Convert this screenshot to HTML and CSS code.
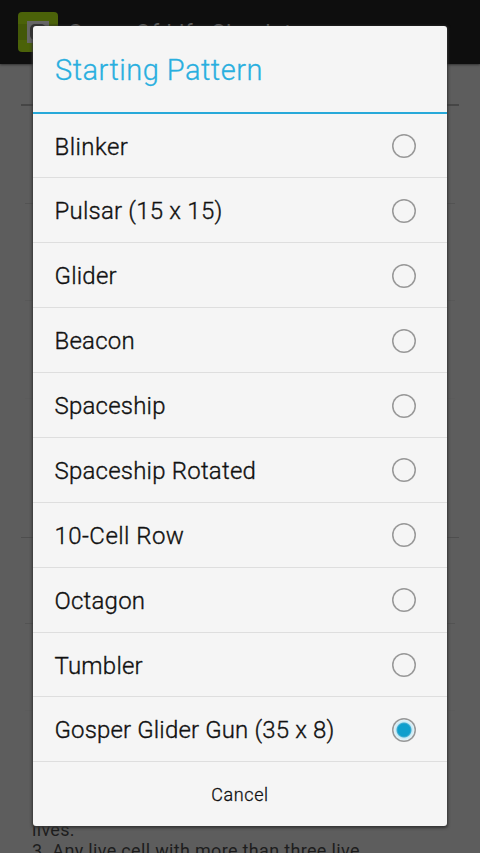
FILE: index.html
```
<!DOCTYPE html>
<html lang="en">
<head>
<meta charset="utf-8">
<title>Game Of Life Simulator</title>
<link rel="stylesheet" href="styles.css">
</head>
<body>
<div class="screen">
  <header class="bar">
    <svg class="logo" width="40" height="40" viewBox="0 0 40 40"><rect width="40" height="40" rx="4" fill="#4b6209"/><rect y="12" width="40" height="16" fill="#435808"/><rect x="9" y="9" width="22" height="22" fill="#666"/><rect x="12" y="12" width="16" height="16" rx="5" fill="#333"/></svg>
    <span class="bar-title">Game Of Life Simulator</span>
  </header>
  <main class="page">
    <div class="rule strong"></div>
    <div class="rule short"></div>
    <div class="rule short faint"></div>
    <div class="rule short none"></div>
    <div class="rule long"></div>
    <div class="rule short near"></div>
    <div class="rule short none"></div>
    <p class="rules">lives.<br>3. Any live cell with more than three live</p>
  </main>
</div>
<section class="dialog" role="dialog">
  <h1 class="title"><span>Starting Pattern</span></h1>
  <ul class="list">
    <li class="item wide"><span>Blinker</span><i class="radio"></i></li>
    <li class="item"><span>Pulsar (15 x 15)</span><i class="radio"></i></li>
    <li class="item"><span>Glider</span><i class="radio"></i></li>
    <li class="item"><span>Beacon</span><i class="radio"></i></li>
    <li class="item"><span>Spaceship</span><i class="radio"></i></li>
    <li class="item"><span>Spaceship Rotated</span><i class="radio"></i></li>
    <li class="item wide"><span>10-Cell Row</span><i class="radio"></i></li>
    <li class="item"><span>Octagon</span><i class="radio"></i></li>
    <li class="item"><span>Tumbler</span><i class="radio"></i></li>
    <li class="item"><span>Gosper Glider Gun (35 x 8)</span><i class="radio checked"></i></li>
  </ul>
  <button class="cancel">Cancel</button>
</section>
</body>
</html>
```
FILE: styles.css
```
* { box-sizing: border-box; }
body { margin: 0; height: 853px; overflow: hidden; font-family: Roboto, "Liberation Sans", sans-serif; }
.screen { height: 853px; overflow: hidden; background: #5d5d5d; display: flex; flex-direction: column; }
.bar { height: 64px; flex: none; background: #0e0e0e; display: flex; align-items: center; padding-left: 18px; gap: 10px; box-shadow: 0 1px 2px #333; }
.bar-title { font-size: 22px; letter-spacing: .83px; color: #606060; line-height: 24px; margin-top: 1px; }
.page { padding: 40px 21px 0; }
.rule { height: 2px; background: #464646; }
.rule.short { margin: 97px 4px 0; height: 1px; background: #535353; }
.rule.faint { margin-top: 96px; background: #585858; }
.rule.none { margin-top: 97px; background: #5b5b5b; }
.rule.long { margin-top: 138px; height: 1px; background: #4e4e4e; }
.rule.near { margin-top: 85px; }
.rule.near + .none { margin-top: 86px; }
.rules { margin: 108px 0 0 11px; font-size: 18px; line-height: 21px; letter-spacing: .33px; color: #1d1d1d; white-space: nowrap; }
.dialog { position: absolute; left: 33px; top: 26px; width: 414px; height: 800px; background: #f5f5f5; border-radius: 3px; box-shadow: 0 1px 3px 1px #333; display: flex; flex-direction: column; }
.title { margin: 0; height: 87.6px; flex: none; border-bottom: 2px solid #27a9d9; padding: 2px 22px 0; display: flex; align-items: center; font-size: 29px; font-weight: 300; letter-spacing: .48px; color: #29afdf; -webkit-text-stroke: .3px; }
.list { margin: 0; padding: 0; list-style: none; }
.item { height: 64.88px; border-bottom: 1px solid #dedede; padding: 1px 31px 0 21.5px; display: flex; align-items: center; justify-content: space-between; font-size: 24px; font-weight: 300; letter-spacing: .22px; color: #111; -webkit-text-stroke: .35px; }
.item span { margin-top: 1px; }
.item.wide { letter-spacing: .45px; }
.item:last-child { letter-spacing: .15px; }
.radio { width: 24px; height: 24px; border-radius: 50%; display: block; box-shadow: inset 0 0 0 1.5px #989898; }
.radio.checked { background: radial-gradient(circle, #0f9fcd 0 6px, #43aed2 7px, #c8eaf5 8px, #eef5f8 11px); }
.cancel { flex: 1; border: 0; padding: 0; background: none; font: 300 18px Roboto, "Liberation Sans", sans-serif; letter-spacing: .6px; color: #111; -webkit-text-stroke: .3px; }
```
